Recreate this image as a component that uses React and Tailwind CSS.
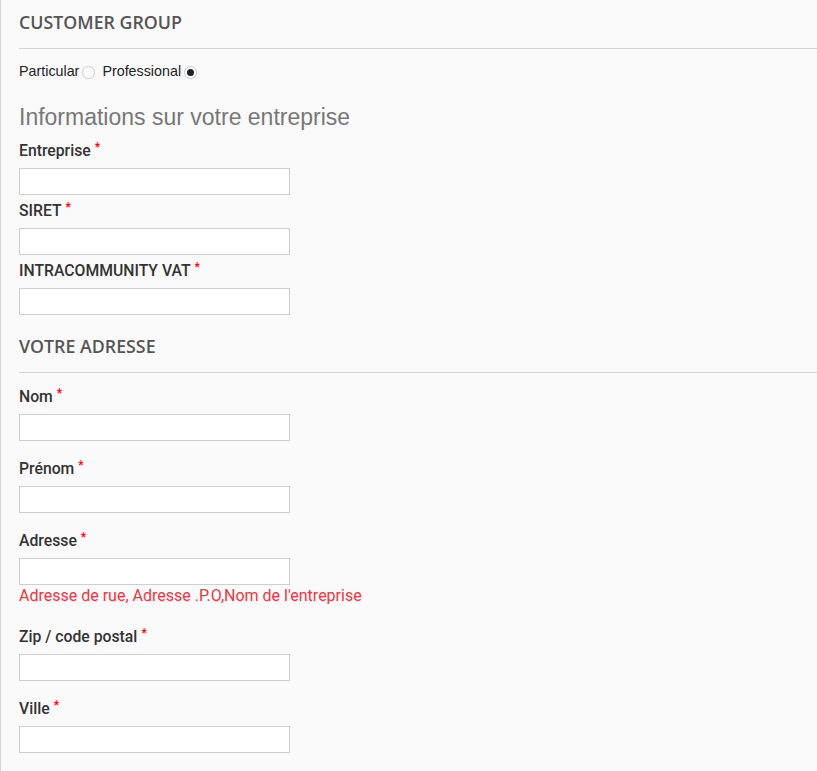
import React from "react";

function Req() {
  return (
    <span className="ml-[4px] relative top-[-5px] text-[12px] leading-none text-[#ff0000]">*</span>
  );
}

function Field({ label, first, gap = "mt-[5px]" }) {
  return (
    <div className={first ? "" : gap}>
      <div className="h-[20px] leading-[22px] text-[15.75px] font-medium text-[#333]" style={{ fontFamily: "Roboto, sans-serif" }}>
        {label}
        <Req />
      </div>
      <div className="mt-[8px] h-[27px] w-[271px] border border-[#cfcfcf] bg-white" />
    </div>
  );
}

function Radio({ checked }) {
  return (
    <span className="ml-[3px] inline-flex h-[13px] w-[13px] items-center justify-center rounded-full border border-[#c8c8c8] bg-white">
      {checked && <span className="h-[7px] w-[7px] rounded-full bg-[#222]" />}
    </span>
  );
}

export default function App() {
  return (
    <div className="min-h-screen border-l border-[#d4d4d4] bg-[#fafafa] pl-[18px]">
      <div
        className="border-b border-[#d3d3d3] pt-[10px] pb-[14px] text-[17.8px] leading-[24px] font-semibold text-[#555]"
        style={{ fontFamily: "'Open Sans', sans-serif" }}
      >
        CUSTOMER GROUP
      </div>
      <div
        className="mt-[13px] flex h-[20px] items-center text-[14.3px] text-[#222]"
        style={{ fontFamily: "'Liberation Sans', Arial, sans-serif" }}
      >
        <span>Particular</span>
        <Radio />
        <span className="ml-[7px]">Professional</span>
        <Radio checked />
      </div>
      <div
        className="mt-[22px] h-[26px] text-[23px] leading-[26px] text-[#777]"
        style={{ fontFamily: "'Liberation Sans', Arial, sans-serif" }}
      >
        Informations sur votre entreprise
      </div>
      <div className="mt-[10px]">
        <Field label="Entreprise" first />
        <Field label="SIRET" />
        <Field label="INTRACOMMUNITY VAT" />
      </div>
      <div
        className="mt-[19px] border-b border-[#d3d3d3] pt-[1px] pb-[14px] text-[17.8px] leading-[23px] font-semibold text-[#555]"
        style={{ fontFamily: "'Open Sans', sans-serif" }}
      >
        VOTRE ADRESSE
      </div>
      <div className="mt-[13px] pb-[18px]">
        <Field label="Nom" first />
        <Field label="Prénom" gap="mt-[17px]" />
        <Field label="Adresse" gap="mt-[17px]" />
        <div
          className="h-[22px] leading-[22px] text-[16px] text-[#ee3540]"
          style={{ fontFamily: "Roboto, sans-serif" }}
        >
          Adresse de rue, Adresse .P.O,Nom de l'entreprise
        </div>
        <Field label="Zip / code postal" gap="mt-[19px]" />
        <Field label="Ville" gap="mt-[17px]" />
      </div>
    </div>
  );
}
